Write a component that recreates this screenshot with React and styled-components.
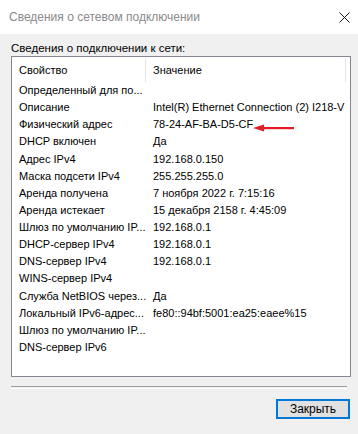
import styled, { createGlobalStyle } from "styled-components";

const GlobalStyle = createGlobalStyle`
  html, body {
    margin: 0;
    padding: 0;
    background: #f0f0f0;
  }
  body {
    font-family: "Liberation Sans", Arial, sans-serif;
    font-size: 11px;
    color: #000;
  }
`;

const rows = [
  ["Определенный для по...", ""],
  ["Описание", "Intel(R) Ethernet Connection (2) I218-V"],
  ["Физический адрес", "78-24-AF-BA-D5-CF"],
  ["DHCP включен", "Да"],
  ["Адрес IPv4", "192.168.0.150"],
  ["Маска подсети IPv4", "255.255.255.0"],
  ["Аренда получена", "7 ноября 2022 г. 7:15:16"],
  ["Аренда истекает", "15 декабря 2158 г. 4:45:09"],
  ["Шлюз по умолчанию IP...", "192.168.0.1"],
  ["DHCP-сервер IPv4", "192.168.0.1"],
  ["DNS-сервер IPv4", "192.168.0.1"],
  ["WINS-сервер IPv4", ""],
  ["Служба NetBIOS через...", "Да"],
  ["Локальный IPv6-адрес...", "fe80::94bf:5001:ea25:eaee%15"],
  ["Шлюз по умолчанию IP...", ""],
  ["DNS-сервер IPv6", ""],
];

const Window = styled.div`
  width: 358px;
  height: 434px;
  background: #f0f0f0;
  display: flex;
  flex-direction: column;
`;

const TitleBar = styled.div`
  height: 34px;
  background: #fff;
  display: flex;
  align-items: center;
  justify-content: space-between;
  padding: 0 8px 0 9px;
  box-sizing: border-box;
  color: #8a8a8a;
  font-size: 12px;
`;

const CloseIcon = () => (
  <svg width="11" height="11" viewBox="0 0 11 11">
    <path d="M0.5 0.5 L10.5 10.5 M10.5 0.5 L0.5 10.5" stroke="#1a1a1a" strokeWidth="1" />
  </svg>
);

const Body = styled.div`
  flex: 1;
  display: flex;
  flex-direction: column;
  padding: 6px 9px 0 11px;
`;

const GroupLabel = styled.div`
  height: 16px;
  line-height: 16px;
  font-size: 11.5px;
`;

const ListBox = styled.div`
  position: relative;
  height: 321px;
  background: #fff;
  border: 1px solid #828790;
  box-sizing: border-box;
  margin-right: -2px;
`;

const HeaderRow = styled.div`
  display: grid;
  grid-template-columns: 134px 200px;
  height: 25px;
  align-items: center;
`;

const HeaderCell = styled.div`
  padding-left: 7px;
  height: 24px;
  line-height: 24px;
  border-right: 1px solid #e5e5e5;
`;

const Row = styled.div`
  display: grid;
  grid-template-columns: 134px 1fr;
  height: 17.13px;
  line-height: 17px;
  white-space: nowrap;
`;

const Cell = styled.div`
  padding-left: 7px;
  overflow: hidden;
`;

const Arrow = styled.svg`
  position: absolute;
  left: 241px;
  top: 66px;
`;

const Separator = styled.div`
  margin-top: 9px;
  margin-right: 2px;
  height: 1px;
  border-top: 1px solid #a0a0a0;
  border-bottom: 1px solid #fff;
`;

const Footer = styled.div`
  display: flex;
  justify-content: flex-end;
  padding-top: 10px;
  margin-right: -1px;
`;

const Button = styled.button`
  width: 74px;
  height: 20px;
  padding: 0;
  background: #e1e1e1;
  border: 2px solid #0078d7;
  font-family: "Liberation Sans", Arial, sans-serif;
  font-size: 12px;
  color: #000;
`;

export default function App() {
  return (
    <>
      <GlobalStyle />
      <Window>
        <TitleBar>
          <span>Сведения о сетевом подключении</span>
          <CloseIcon />
        </TitleBar>
        <Body>
          <GroupLabel>Сведения о подключении к сети:</GroupLabel>
          <ListBox>
            <HeaderRow>
              <HeaderCell>Свойство</HeaderCell>
              <HeaderCell>Значение</HeaderCell>
            </HeaderRow>
            {rows.map(([name, value], i) => (
              <Row key={i}>
                <Cell>{name}</Cell>
                <Cell>{value}</Cell>
              </Row>
            ))}
            <Arrow width="44" height="10" viewBox="0 0 44 10">
              <path d="M0 5 L11 1.5 L11 8.5 Z" fill="#e51b24" />
              <rect x="10" y="4" width="31" height="2.2" fill="#e51b24" />
            </Arrow>
          </ListBox>
          <Separator />
          <Footer>
            <Button>Закрыть</Button>
          </Footer>
        </Body>
      </Window>
    </>
  );
}
